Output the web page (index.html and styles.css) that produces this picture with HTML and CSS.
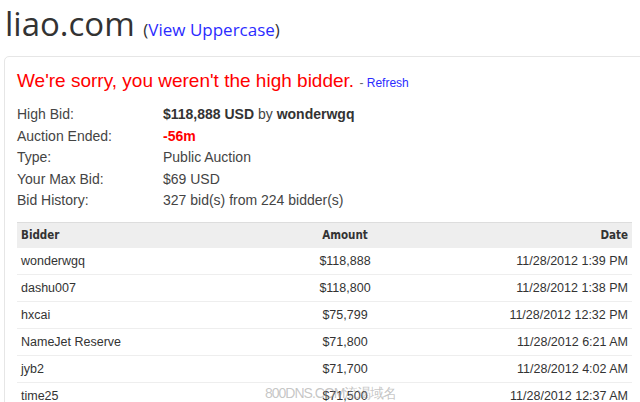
FILE: index.html
```html
<!DOCTYPE html>
<html lang="en">
  <head>
    <meta charset="UTF-8" />
    <meta name="viewport" content="width=device-width, initial-scale=1.0" />
    <title>liao.com auction</title>
    <link rel="stylesheet" href="styles.css">
  </head>
  <body>
    <h1 class="domain">liao.com <span class="domain-alt">(<a href="#">View Uppercase</a>)</span></h1>

    <div class="panel">
      <h2 class="status">We're sorry, you weren't the high bidder. <span class="refresh">- <a href="#">Refresh</a></span></h2>

      <dl class="info">
        <dt>High Bid:</dt>
        <dd><b>$118,888 USD</b> by <b>wonderwgq</b></dd>
        <dt>Auction Ended:</dt>
        <dd class="ended">-56m</dd>
        <dt>Type:</dt>
        <dd>Public Auction</dd>
        <dt>Your Max Bid:</dt>
        <dd>$69 USD</dd>
        <dt>Bid History:</dt>
        <dd>327 bid(s) from 224 bidder(s)</dd>
      </dl>

      <table class="bids">
        <tr>
          <th class="col-bidder">Bidder</th>
          <th class="col-amount">Amount</th>
          <th class="col-date">Date</th>
        </tr>
        <tr><td>wonderwgq</td><td class="col-amount">$118,888</td><td class="col-date">11/28/2012 1:39 PM</td></tr>
        <tr><td>dashu007</td><td class="col-amount">$118,800</td><td class="col-date">11/28/2012 1:38 PM</td></tr>
        <tr><td>hxcai</td><td class="col-amount">$75,799</td><td class="col-date">11/28/2012 12:32 PM</td></tr>
        <tr><td>NameJet Reserve</td><td class="col-amount">$71,800</td><td class="col-date">11/28/2012 6:21 AM</td></tr>
        <tr><td>jyb2</td><td class="col-amount">$71,700</td><td class="col-date">11/28/2012 4:02 AM</td></tr>
        <tr><td>time25</td><td class="col-amount">$71,500</td><td class="col-date">11/28/2012 12:37 AM</td></tr>
      </table>
    </div>

    <div class="watermark">800DNS.COM流渴域名</div>
  </body>
</html>
```

FILE: styles.css
```css
body {
  margin: 0;
  padding: 0 0 0 4px;
  font-family: Arial, "Liberation Sans", sans-serif;
  color: #444;
  background-color: #fff;
  overflow: hidden;
}

a {
  color: #2b2bff;
  text-decoration: none;
}

.domain {
  margin: 0;
  padding: 2px 0 10px 1px;
  font-family: "Open Sans", sans-serif;
  font-weight: normal;
  font-size: 33px;
  line-height: 44px;
  color: #333;
}

.domain-alt {
  font-size: 17px;
  line-height: 1;
  color: #333;
}

.panel {
  margin-right: -20px;
  padding: 11px 27px 0 12px;
  border: 1px solid #e6e6e6;
  border-radius: 5px;
}

.status {
  margin: 0 0 8px;
  font-size: 19px;
  font-weight: normal;
  line-height: 26px;
  color: #ff0000;
}

.refresh {
  font-size: 12px;
  color: #666;
}

.info {
  display: grid;
  grid-template-columns: 146px 1fr;
  margin: 0 0 10px;
  font-size: 14px;
  line-height: 21.5px;
}

.info dt,
.info dd {
  margin: 0;
}

.info b {
  color: #333;
}

.ended {
  color: #ff0000;
  font-weight: bold;
}

.bids {
  width: 100%;
  border-collapse: collapse;
  font-size: 12.5px;
  color: #333;
}

.bids th {
  height: 25px;
  padding: 0 4px;
  background-color: #eee;
  border-top: 1px solid #ddd;
  font-family: "DejaVu Sans Condensed", "Liberation Sans Narrow", sans-serif;
  font-size: 11.5px;
  color: #333;
  text-align: left;
}

.bids td {
  height: 26px;
  padding: 0 4px;
  border-bottom: 1px solid #eee;
}

.bids .col-bidder {
  width: 226px;
}

.bids .col-amount {
  width: 180px;
  text-align: center;
}

.bids .col-date {
  text-align: right;
}

.watermark {
  position: absolute;
  left: 265px;
  top: 385px;
  font-size: 14px;
  color: rgba(150, 150, 150, 0.55);
  letter-spacing: -1px;
}
```
